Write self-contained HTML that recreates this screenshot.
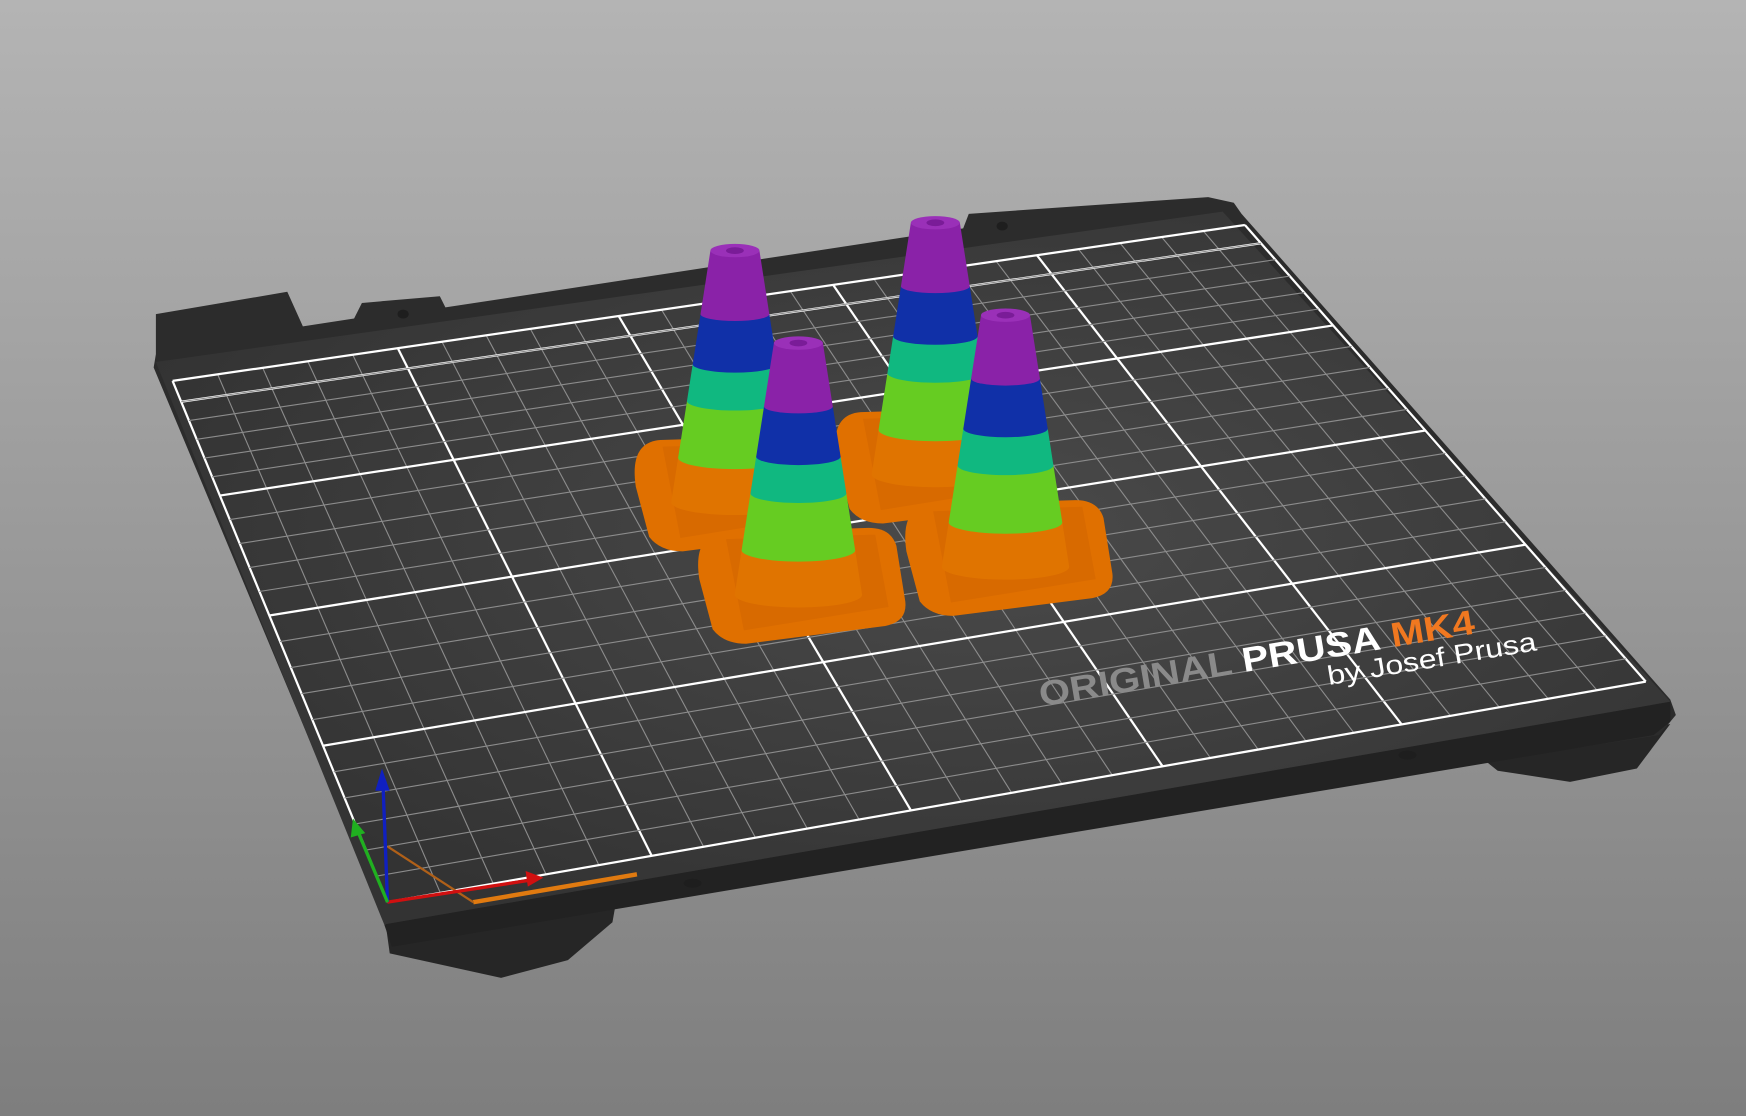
<!DOCTYPE html>
<html><head><meta charset="utf-8"><style>
html,body{margin:0;padding:0;width:1746px;height:1116px;overflow:hidden}
svg{display:block}
</style></head><body>
<svg id="s" width="1746" height="1116" viewBox="0 0 1568 1002" preserveAspectRatio="none" xmlns="http://www.w3.org/2000/svg">
<defs>
<linearGradient id="bg" x1="0" y1="0" x2="0" y2="1">
<stop offset="0" stop-color="#b4b4b4"/><stop offset="1" stop-color="#7e7e7e"/></linearGradient>
<radialGradient id="glow" cx="0.55" cy="0.45" r="0.6">
<stop offset="0" stop-color="#4a4a4a"/><stop offset="1" stop-color="#333"/></radialGradient>
</defs>
<rect width="1568" height="1002" fill="url(#bg)"/>
<polygon points="345,820 555,800 550,828 510,862 450,878 350,856" fill="#262626"/>
<polygon points="1330,680 1500,650 1470,690 1410,702 1345,692" fill="#262626"/>
<polygon fill="#2c2c2c" points="140,282 258,262 272,293 318,286 325,272 395,266 400,276 865,205 870,192 1085,177 1108,182 1115,192 1500,628 1505,642 1490,660 355,838 348,832 138,330 140,318"/>
<polygon fill="#222" points="345,830 1500,630 1500,648 1485,660 352,850"/>
<polygon id="top" fill="url(#glow)" points="140,325 1098,190 1500,630 345,830"/>
<g id="grid"></g>
<g id="cones"></g>
<g transform="translate(935,634) rotate(-9.5)" font-family="Liberation Sans, sans-serif" font-weight="bold" font-size="31">
<text x="0" y="0" fill="#8a8a8a" textLength="396" lengthAdjust="spacingAndGlyphs">ORIGINAL <tspan fill="#fff">PRUSA</tspan> <tspan fill="#f07820">MK4</tspan></text>
<text x="258" y="24" fill="#fff" font-weight="normal" font-size="24" textLength="190" lengthAdjust="spacingAndGlyphs">by Josef Prusa</text>
</g>
<ellipse cx="622" cy="793" rx="8" ry="4" fill="#1e1e1e"/>
<ellipse cx="1264" cy="678" rx="8" ry="4" fill="#1e1e1e"/>
<ellipse cx="362" cy="282" rx="5" ry="4" fill="#1e1e1e"/>
<ellipse cx="900" cy="203" rx="5" ry="4" fill="#1e1e1e"/>
<line x1="425" y1="810" x2="572" y2="785" stroke="#e07a10" stroke-width="4"/>
<line x1="348" y1="760" x2="425" y2="810" stroke="#b06018" stroke-width="2"/>
<line x1="348" y1="810" x2="478" y2="790" stroke="#d01010" stroke-width="3"/>
<polygon points="488,788 472,782 474,796" fill="#d01010"/>
<line x1="348" y1="810" x2="344" y2="705" stroke="#1020c0" stroke-width="3"/>
<polygon points="343,690 337,710 350,710" fill="#1020c0"/>
<line x1="348" y1="810" x2="322" y2="748" stroke="#20b020" stroke-width="3"/>
<polygon points="317,735 315,752 328,748" fill="#20b020"/>
</svg>
<script>
var NS="http://www.w3.org/2000/svg";
function el(p,t,a){var e=document.createElementNS(NS,t);for(var k in a)e.setAttribute(k,a[k]);p.appendChild(e);return e;}
var TL=[155,342],TR=[1118,202],BR=[1478,612],BL=[348,810];
function P(u,v){var x=(1-u)*(1-v)*TL[0]+u*(1-v)*TR[0]+u*v*BR[0]+(1-u)*v*BL[0];
var y=(1-u)*(1-v)*TL[1]+u*(1-v)*TR[1]+u*v*BR[1]+(1-u)*v*BL[1];return [x,y];}
var g=document.getElementById('grid');
function lines(secs,n,extra,vert){
 var list=[];
 for(var s=0;s<secs.length-1;s++){var a=secs[s],b=secs[s+1];var m=n[s];
  for(var k=0;k<m;k++)list.push([a+(b-a)*k/m,k==0]);}
 list.push([1,true]);
 extra.forEach(function(e){list.push([e,false]);});
 list.forEach(function(l){var a,b;
  if(vert){a=P(l[0],0);b=P(l[0],1);}else{a=P(0,l[0]);b=P(1,l[0]);}
  el(g,'line',{x1:a[0],y1:a[1],x2:b[0],y2:b[1],stroke:l[1]?'#fff':'#8c8c8c','stroke-width':l[1]?2:1});});
}
lines([0,0.21,0.416,0.616,0.806,1],[5,5,5,5,5],[],true);
lines([0.04,0.22,0.45,0.70,1],[5,5,5,6],[],false);
(function(){var a=P(0,0),b=P(1,0);el(g,'line',{x1:a[0],y1:a[1],x2:b[0],y2:b[1],stroke:'#fff','stroke-width':2});
var a2=P(0,0.04),b2=P(1,0.04);el(g,'line',{x1:a2[0],y1:a2[1],x2:b2[0],y2:b2[1],stroke:'#8c8c8c','stroke-width':1});})();
var c=document.getElementById('cones');
function cone(dx,dy){
 el(c,'path',{d:'M'+(650+dx)+','+(478+dy)+' L'+(780+dx)+','+(474+dy)+' Q'+(800+dx)+','+(474+dy)+' '+(805+dx)+','+(490+dy)+' L'+(813+dx)+','+(540+dy)+' Q'+(815+dx)+','+(558+dy)+' '+(795+dx)+','+(562+dy)+' L'+(670+dx)+','+(578+dy)+' Q'+(650+dx)+','+(578+dy)+' '+(640+dx)+','+(565+dy)+' L'+(628+dx)+','+(520+dy)+' Q'+(622+dx)+','+(480+dy)+' '+(650+dx)+','+(478+dy)+'Z',fill:'#e07000'});
 el(c,'path',{d:'M'+(652+dx)+','+(484+dy)+' L'+(786+dx)+','+(480+dy)+' L'+(798+dx)+','+(545+dy)+' L'+(668+dx)+','+(566+dy)+'Z',fill:'#d86a00'});
 var cx=717+dx, yt=308+dy;
 var bands=[[0,57,'#8a22a8'],[57,102,'#1030a8'],[102,135,'#10b880'],[135,186,'#66cc22'],[186,226,'#e07400']];
 function hw(y){return 22+(y/186)*29;}
 for(var k=bands.length-1;k>=0;k--){var b=bands[k];var y0=b[0],y1=b[1];
  var w0=hw(y0),w1=hw(y1);
  el(c,'path',{d:'M'+(cx-w0)+','+(yt+y0)+' L'+(cx+w0)+','+(yt+y0)+' L'+(cx+w1)+','+(yt+y1)+' A'+w1+','+(w1*0.2)+' 0 0 1 '+(cx-w1)+','+(yt+y1)+'Z',fill:b[2]});
 }
 el(c,'ellipse',{cx:cx,cy:yt,rx:22,ry:6,fill:'#9a30b8'});
 el(c,'ellipse',{cx:cx,cy:yt,rx:8,ry:3,fill:'#7a1c98'});
}
cone(-57,-83);cone(123,-108);cone(0,0);cone(186,-25);
</script>
</body></html>
